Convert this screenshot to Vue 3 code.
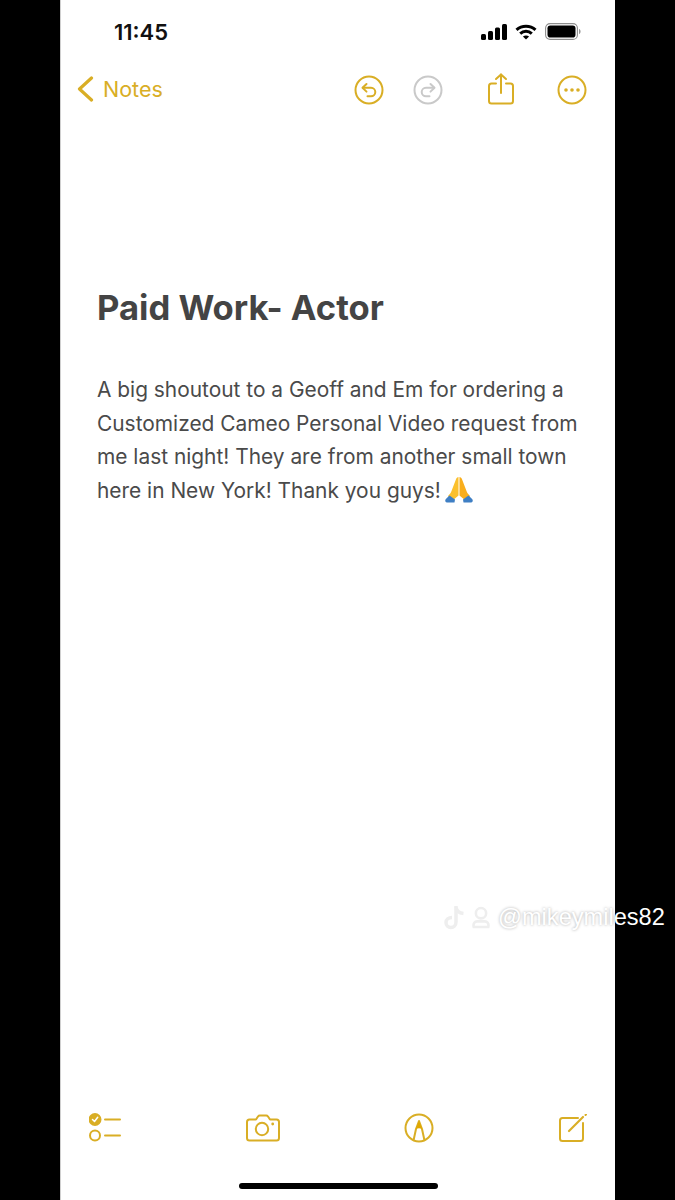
<template>
  <div class="page">
    <div class="screen">
      <div class="status">
        <span class="time">11:45</span>
        <div class="status-icons">
          <svg width="26" height="16" viewBox="0 0 26 16"><rect x="0" y="10" width="5" height="6" rx="1.5" /><rect x="7" y="7" width="5" height="9" rx="1.5" /><rect x="14" y="3.5" width="5" height="12.5" rx="1.5" /><rect x="21" y="0" width="5" height="16" rx="1.5" /></svg>
          <svg width="22" height="16" viewBox="0 0 22 16" fill="none" stroke="#000" stroke-width="3"><path d="M1.5 5.8C6.8 .9 15.2 .9 20.5 5.8" /><path d="M5.2 9.6C8.5 6.6 13.5 6.6 16.8 9.6" /><path d="M11 15.5L7.9 12.6C9.7 11 12.3 11 14.100 12.600Z" fill="#000" stroke="none" /></svg>
          <svg width="36" height="17" viewBox="0 0 36 17"><rect x=".6" y=".6" width="31.800" height="15.800" rx="4.500" fill="none" stroke="#8e8e8e" stroke-width="1.100" /><rect x="2.500" y="2.500" width="28" height="12" rx="2.800" /><path d="M34 6v5c1-.3 1.600-1.400 1.600-2.500S35 6.300 34 6z" fill="#999" /></svg>
        </div>
      </div>

      <div class="nav">
        <div class="back">
          <svg width="17" height="26" viewBox="0 0 17 26" fill="none" stroke="#d9ae25" stroke-width="3.200" stroke-linecap="round" stroke-linejoin="round"><path d="M14.500 2L2.500 13L14.500 24" /></svg>
          <span>Notes</span>
        </div>
        <div class="nav-actions">
          <svg width="30" height="30" viewBox="0 0 30 30" fill="none" stroke="#d9ae25" stroke-width="2" stroke-linecap="round" stroke-linejoin="round"><circle cx="15" cy="15" r="13.500" /><path d="M12.500 9L8.500 12.800L12.500 16.600" /><path d="M9 12.800H17C19.600 12.800 21.300 14.800 21.300 17C21.300 19.400 19.400 21.300 17 21.300H13.500" /></svg>
          <svg width="30" height="30" viewBox="0 0 30 30" fill="none" stroke="#c9c9c9" stroke-width="2" stroke-linecap="round" stroke-linejoin="round"><circle cx="15" cy="15" r="13.500" /><path d="M17.500 9L21.500 12.800L17.500 16.600" /><path d="M21 12.800H13C10.400 12.800 8.700 14.800 8.700 17C8.700 19.400 10.600 21.300 13 21.300H16.500" /></svg>
          <svg class="share" width="26" height="32" viewBox="0 0 26 32" fill="none" stroke="#d9ae25" stroke-width="2" stroke-linecap="round" stroke-linejoin="round"><path d="M8 10.500H3.500C2 10.500 1 11.500 1 13V28C1 29.500 2 30.500 3.500 30.500H22.500C24 30.500 25 29.500 25 28V13C25 11.500 24 10.500 22.500 10.500H18" /><path d="M13 20V1.500" /><path d="M8 6L13 1.500L18 6" /></svg>
          <svg width="30" height="30" viewBox="0 0 30 30" fill="none" stroke="#d9ae25" stroke-width="2"><circle cx="15" cy="15" r="13.500" /><g fill="#d9ae25" stroke="none"><circle cx="9" cy="15" r="1.800" /><circle cx="15" cy="15" r="1.800" /><circle cx="21" cy="15" r="1.800" /></g></svg>
        </div>
      </div>

      <div class="note">
        <h1>Paid Work- Actor</h1>
        <p>A big shoutout to a Geoff and Em for ordering a Customized Cameo Personal Video request from me last night! They are from another small town here in New York! Thank you guys! <svg class="pray" width="30" height="30" viewBox="0 0 30 30"><path d="M14.500 3C13.300 3 12.500 4 12 5.200L7.500 17C6.800 19 5.500 20.500 4 22L8 27L14.500 21.500Z" fill="#fbc02d" /><path d="M15.500 3C16.700 3 17.500 4 18 5.200L22.500 17C23.200 19 24.500 20.500 26 22L22 27L15.500 21.500Z" fill="#f9ae1c" /><path d="M1.500 25.500C3 23.800 4.500 22.500 5.500 21.500L11 25.500L10.500 28.500H3C1.500 28.500 .8 26.500 1.500 25.500Z" fill="#3f7fc4" /><path d="M28.500 25.500C27 23.800 25.500 22.500 24.500 21.500L19 25.500L19.500 28.500H27C28.500 28.500 29.200 26.500 28.500 25.500Z" fill="#3f7fc4" /></svg></p>
      </div>

      <div class="toolbar">
        <svg width="32" height="30" viewBox="0 0 32 30" fill="none" stroke="#d9ae25" stroke-width="2" stroke-linecap="round"><circle cx="6" cy="6.500" r="5.500" fill="#d9ae25" /><path d="M3.500 6.500L5.500 8.500L8.700 4.300" stroke="#fff" stroke-width="1.500" stroke-linejoin="round" /><circle cx="6" cy="22.500" r="5" /><path d="M16 6.500H31" /><path d="M16 22.500H31" /></svg>
        <svg width="34" height="28" viewBox="0 0 34 28" fill="none" stroke="#d9ae25" stroke-width="2" stroke-linejoin="round"><path d="M3.500 5.500H10L12 2.500C12.500 1.800 13 1.500 13.800 1.500H20.200C21 1.500 21.500 1.800 22 2.500L24 5.500H30.500C32 5.500 33 6.500 33 8V24C33 25.500 32 26.500 30.500 26.500H3.500C2 26.500 1 25.500 1 24V8C1 6.500 2 5.500 3.500 5.500Z" /><circle cx="16" cy="15" r="6.200" /><circle cx="26.700" cy="10" r="1.400" fill="#d9ae25" stroke="none" /></svg>
        <svg width="30" height="30" viewBox="0 0 30 30" fill="none" stroke="#d9ae25" stroke-width="2" stroke-linejoin="round"><circle cx="15" cy="15" r="13.500" /><path d="M9.500 27.500L12 16L15 8L18 16L20.500 27.500" /><path d="M11.800 16L15 8L18.200 16C16 15 14 15 11.800 16Z" fill="#e0a800" stroke="none" /></svg>
        <svg width="28" height="28" viewBox="0 0 28 28" fill="none" stroke="#d9ae25" stroke-width="2" stroke-linecap="round"><path d="M19 4H3.500C2 4 1 5 1 6.500V24.500C1 26 2 27 3.500 27H21.500C23 27 24 26 24 24.500V9" /><path d="M10 17L24 3" stroke-width="2.200" /><path d="M26.500 1L27 .5" /></svg>
      </div>

      <div class="home-bar"></div>
    </div>

    <div class="watermark">
      <svg width="24" height="25" viewBox="0 0 24 25" fill="none" stroke="#eeeeee" stroke-width="3.500"><path d="M13 1V17C13 20.500 10.500 22.500 8 22.500C5 22.500 3 20 3 17.500C3 14.500 5.500 12.500 9 12.500" /><path d="M13 2C13.500 5.500 16 8 20.500 8.500" /></svg>
      <svg class="person" width="18" height="25" viewBox="0 0 21 25" fill="none" stroke="#eeeeee" stroke-width="3"><circle cx="10.500" cy="7.500" r="6" /><path d="M2 23.500C1 19.500 3.500 17 6 17H15C17.500 17 20 19.500 19 23.500Z" /></svg>
      <span>@mikeymiles82</span>
    </div>
  </div>
</template>

<script setup>
</script>

<style>
html, body {
  margin: 0;
  background: #000;
}
</style>

<style scoped>
.page {
  position: relative;
  width: 675px;
  height: 1200px;
  background: #000;
  overflow: hidden;
}

.screen {
  margin-left: 60px;
  width: 555px;
  height: 1200px;
  background: #fff;
  border-left: 1px solid #d0d0d0;
  box-sizing: border-box;
  display: flex;
  flex-direction: column;
  font-family: Inter, "Liberation Sans", sans-serif;
}

.status {
  height: 63px;
  padding: 0 34px 0 53px;
  display: flex;
  justify-content: space-between;
  align-items: center;
}

.time {
  font-size: 22px;
  font-weight: 600;
  color: #111;
}

.status-icons {
  display: flex;
  align-items: center;
  gap: 8px;
}

.nav {
  height: 54px;
  padding: 0 28px 0 16px;
  display: flex;
  justify-content: space-between;
  align-items: center;
}

.back {
  display: flex;
  align-items: center;
  gap: 9px;
  margin-top: -2px;
  font-size: 21.5px;
  color: #d9ae25;
}

.nav-actions {
  display: flex;
  align-items: center;
  gap: 29px;
}

.share {
  margin: -3px 14px 0 16px;
}

.note {
  flex: 1;
  padding: 0 25px 0 36px;
}

h1 {
  margin: 168px 0 0;
  font-size: 34.6px;
  line-height: 44px;
  font-weight: 700;
  color: #444;
}

p {
  margin: 44px 0 0;
  font-size: 20.9px;
  line-height: 33.5px;
  color: #4a4a4a;
}

.pray {
  vertical-align: -6px;
  margin-left: -3px;
}

.toolbar {
  padding: 0 28px;
  display: flex;
  justify-content: space-between;
  align-items: center;
  margin-bottom: 40px;
}

.home-bar {
  align-self: center;
  width: 199px;
  height: 6px;
  margin-bottom: 11px;
  border-radius: 3px;
  background: #000;
}

.watermark {
  position: absolute;
  left: 443px;
  top: 904px;
  display: flex;
  align-items: center;
  gap: 5px;
  font-family: "Liberation Sans", Arial, sans-serif;
  font-size: 23.6px;
  color: #fff;
  text-shadow: 0 0 3px rgba(0, 0, 0, 0.35);
}

.person {
  margin-right: 3px;
}
</style>
